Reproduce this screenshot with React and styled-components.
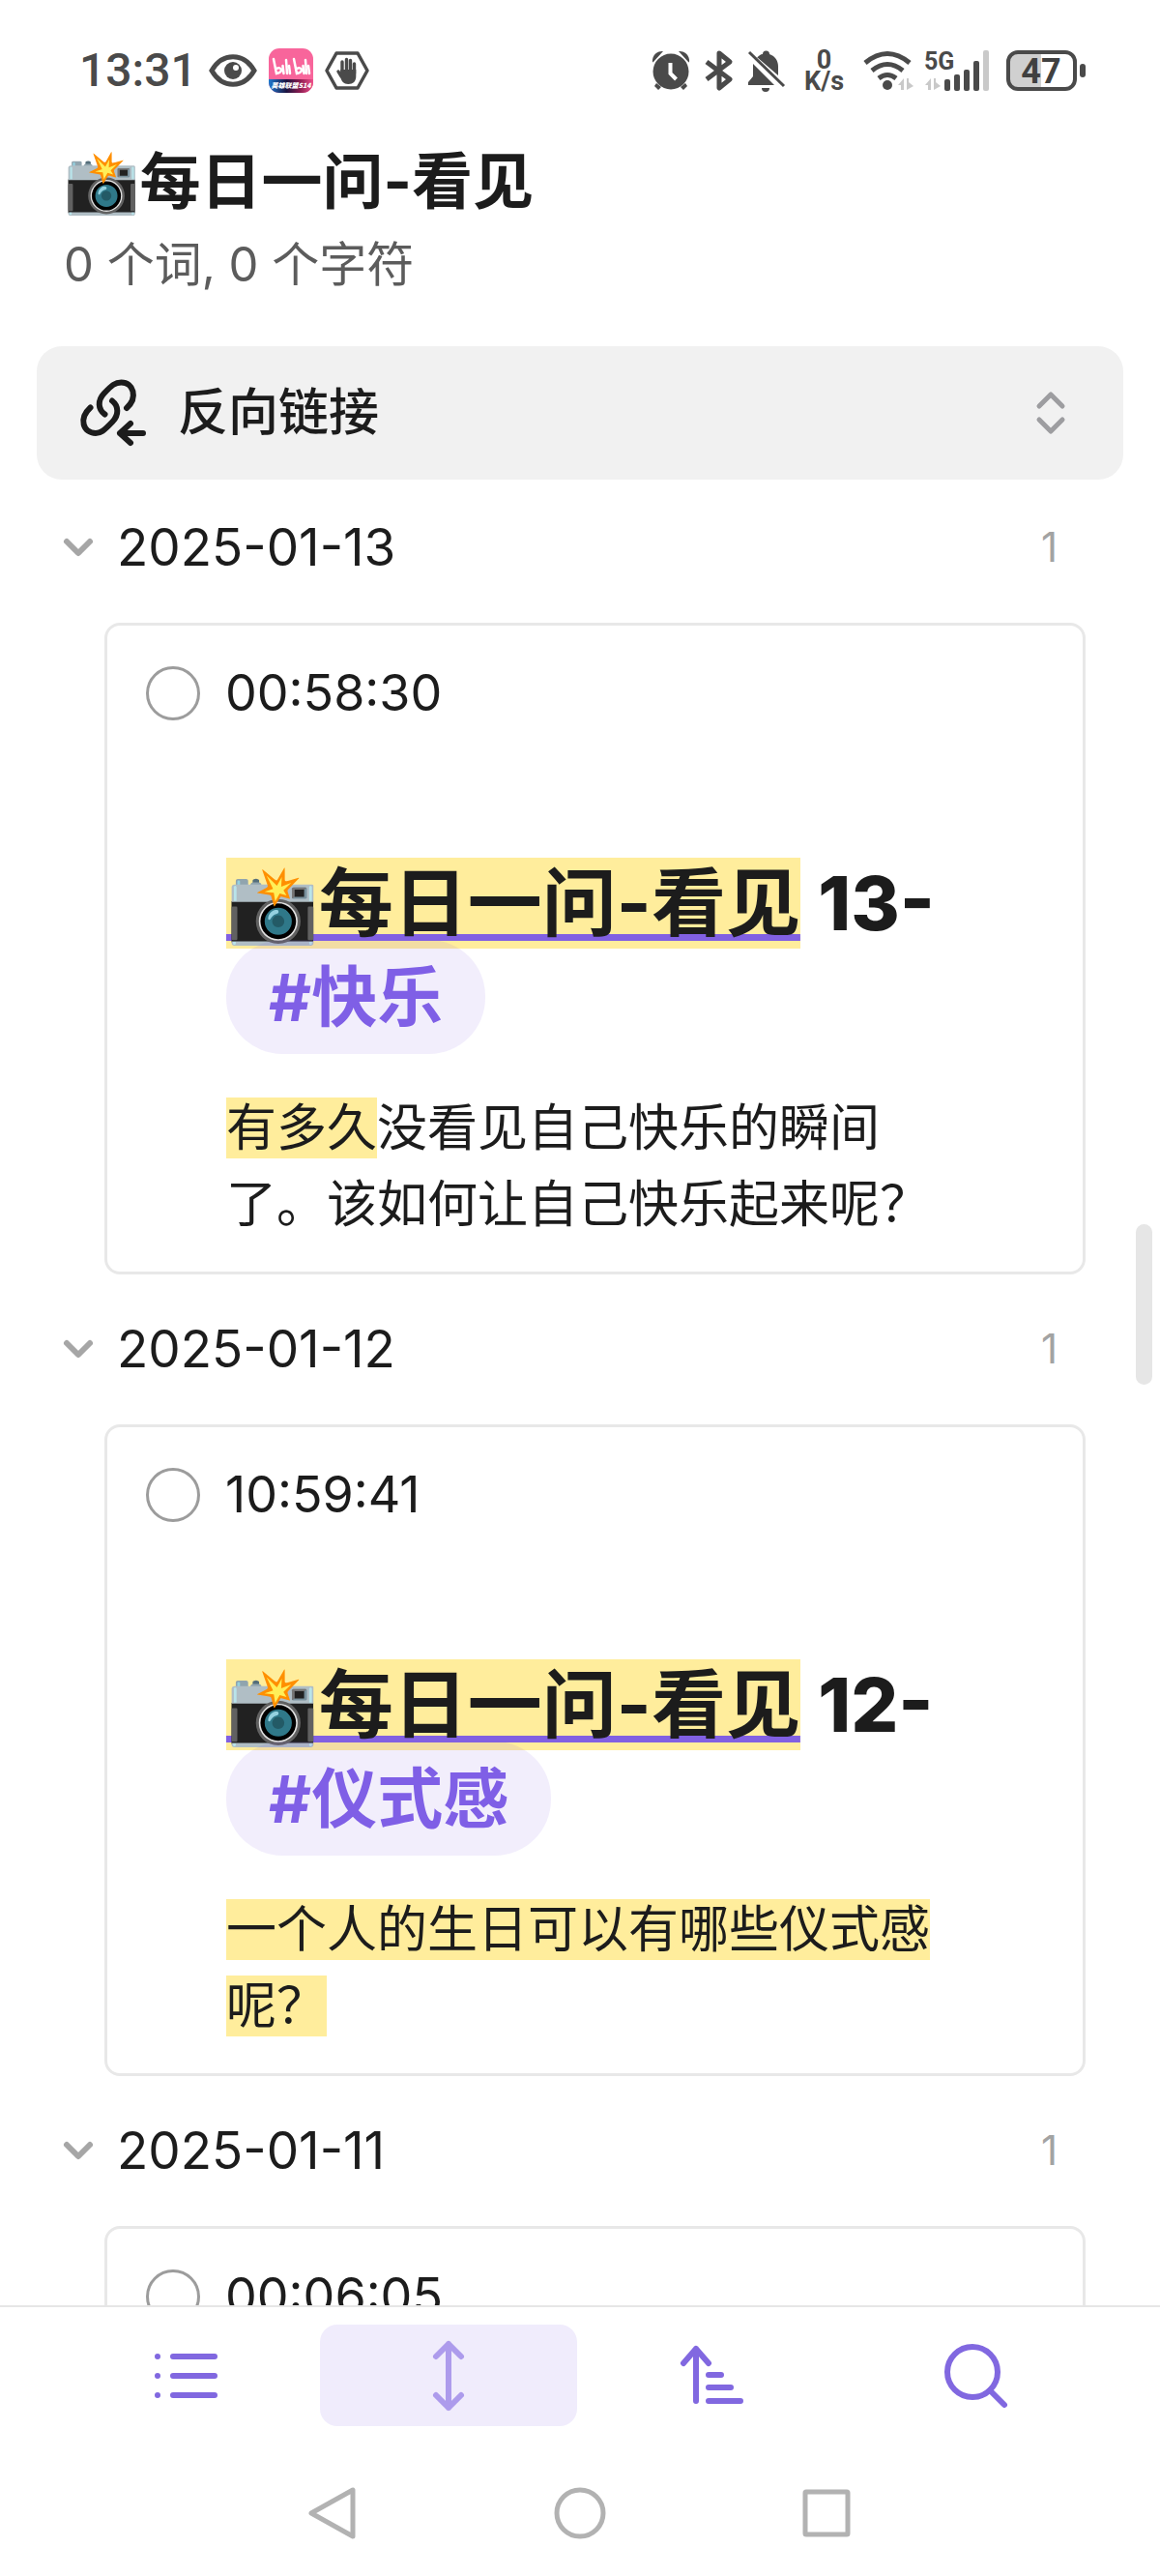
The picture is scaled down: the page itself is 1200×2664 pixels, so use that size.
import React, { useState } from "react";
import styled, { createGlobalStyle } from "styled-components";

const groups = [
  {
    date: "2025-01-13",
    count: 1,
    time: "00:58:30",
    day: "13-",
    tag: "#快乐",
    marked: "有多久",
    rest: "没看见自己快乐的瞬间了。该如何让自己快乐起来呢？",
  },
  {
    date: "2025-01-12",
    count: 1,
    time: "10:59:41",
    day: "12-",
    tag: "#仪式感",
    marked: "一个人的生日可以有哪些仪式感呢？",
    rest: "",
  },
  { date: "2025-01-11", count: 1, time: "00:06:05" },
];

const StatusIcons = () => (
  <>
    <svg width="40" height="42" viewBox="0 0 40 42" fill="#4a4a4a">
      <path d="M1 12A10 10 0 0 1 12 1L1.500 12.500ZM39 12A10 10 0 0 0 28 1L38.500 12.500Z" />
      <path d="M5 34l5 4-3 3-4-4zM35 34l-5 4 3 3 4-4z" />
      <circle cx="20" cy="22" r="18.500" />
      <path d="M19.500 13v11l6 6" fill="none" stroke="#fff" strokeWidth="4" />
    </svg>
    <svg width="28" height="42" viewBox="0 0 28 42" fill="none" stroke="#4a4a4a" strokeWidth="5" strokeLinejoin="round">
      <path d="M1 12l24 18-11 9V3l11 9L1 30" />
    </svg>
    <svg width="38" height="42" viewBox="0 0 38 42" fill="#4a4a4a">
      <path d="M8 9C10 6 13 4 15 4a3.500 3.500 0 0 1 7 0c6 2 9 7 9 13v9L9.500 7.500ZM5 14l22 22H0v-3l5-6Z" />
      <path d="M14 39h8a4 4 0 0 1-8 0Z" />
      <path d="M1 2l36 35" stroke="#4a4a4a" strokeWidth="3" />
    </svg>
    <Speed>
      <span>0</span>
      <span>K/s</span>
    </Speed>
    <svg width="132" height="42" viewBox="0 0 132 42">
      <g fill="none" stroke="#4a4a4a" strokeWidth="5">
        <path d="M2 13q23-19 46 0M9 21q16-13 32 0M16 29q9-7 18 0" />
      </g>
      <circle cx="25" cy="36" r="5" fill="#4a4a4a" />
      <g fill="#c9c9c9">
        <path d="M36 36l6-7v12h-3v-5zM45 29h2v4l5 4-7 4zM64 36l6-7v12h-3v-5zM73 29h2v4l5 4-7 4z" />
        <rect x="124" y="0" width="6" height="42" rx="2" />
      </g>
      <text x="63" y="20" fontFamily="Roboto" fontSize="25" fontWeight="700" fill="#4a4a4a">
        5G
      </text>
      <g fill="#4a4a4a">
        <rect x="84" y="30" width="6" height="12" rx="2" />
        <rect x="94" y="25" width="6" height="17" rx="2" />
        <rect x="104" y="20" width="6" height="22" rx="2" />
        <rect x="114" y="11" width="6" height="31" rx="2" />
      </g>
    </svg>
    <svg width="82" height="42" viewBox="0 0 82 42">
      <path d="M10 4h26v34H10a6 6 0 0 1-6-6V10a6 6 0 0 1 6-6Z" fill="#d0d0d0" />
      <rect x="2" y="2" width="69" height="38" rx="10" fill="none" stroke="#4a4a4a" strokeWidth="4" />
      <rect x="76" y="14" width="6" height="14" rx="3" fill="#4a4a4a" />
      <text x="36" y="34" textAnchor="middle" fontFamily="Roboto" fontSize="36" fontWeight="700" fill="#404040">
        47
      </text>
    </svg>
  </>
);

const AppBadges = () => (
  <>
    <svg width="50" height="34" viewBox="0 0 50 34">
      <path d="M3 17C14-2 36-2 47 17C36 36 14 36 3 17Z" fill="none" stroke="#4a4a4a" strokeWidth="5" />
      <circle cx="25" cy="17" r="9" fill="#4a4a4a" />
      <circle cx="28" cy="14" r="3" fill="#fff" />
    </svg>
    <svg width="46" height="46" viewBox="0 0 46 46">
      <defs>
        <linearGradient id="band">
          <stop offset="0" stopColor="#1f7ad0" />
          <stop offset="0.400" stopColor="#1c1440" />
          <stop offset="0.700" stopColor="#8a1c50" />
          <stop offset="1" stopColor="#f0508c" />
        </linearGradient>
        <clipPath id="badge">
          <rect width="46" height="46" rx="11" />
        </clipPath>
      </defs>
      <g clipPath="url(#badge)">
        <rect width="46" height="46" fill="#f8659b" />
        <rect y="32" width="46" height="14" fill="url(#band)" />
        <g fill="none" stroke="#fff" strokeWidth="2.500" strokeLinecap="round">
          <path d="M5 11l3 15c8-1 5-8 0-5M14.500 18l1 8M18 12l1 14M21 18l1 8M26 11l3 15c8-1 5-8 0-5M35.500 18l1 8M38 12l1 14M41 18l1 8" />
        </g>
        <text x="23" y="41" textAnchor="middle" fontFamily="Noto Sans CJK SC" fontStyle="italic" fontSize="7" fontWeight="900" fill="#fff">
          英雄联盟S14
        </text>
      </g>
    </svg>
    <svg width="46" height="42" viewBox="0 0 46 42">
      <path d="M12 3h22l10 18-10 18H12L2 21Z" fill="none" stroke="#4a4a4a" strokeWidth="3.500" strokeLinejoin="round" />
      <g stroke="#4a4a4a" strokeWidth="3.400" strokeLinecap="round" fill="none">
        <path d="M18 24V12M22.500 22V9.500M26.500 22V10.500M30.500 24V14M17 27l-3-5" />
      </g>
      <path d="M16.300 20h16v7c0 5-3 8-8 8-5 0-7-3-8-7Z" fill="#4a4a4a" />
    </svg>
  </>
);

const LinkBackIcon = () => (
  <svg width="70" height="70" viewBox="0 0 70 70" fill="none" stroke="#1c1c1c" strokeWidth="6" strokeLinecap="round" strokeLinejoin="round">
    <path d="M11.500 29.500C-1 41 4 56 17 56C22 56 25 54 34.500 44C41 37 41 28 34 22.500" />
    <path d="M26.500 36.500C19 31 19 22 25.500 15C34 6 37 3.500 43.500 3.500C56 3.500 61 19 49 30" />
    <path d="M66 56H42M53 46L42 56l11 10" />
  </svg>
);

const ToolIcon = ({ children }) => (
  <svg width="72" height="72" viewBox="0 0 72 72" fill="none" stroke="currentColor" strokeWidth="6" strokeLinecap="round" strokeLinejoin="round">
    {children}
  </svg>
);

const Entry = ({ group }) => {
  const [open, setOpen] = useState(true);
  return (
    <section>
      <DateRow type="button" aria-expanded={open} onClick={() => setOpen(!open)}>
        <svg width="30" height="20" viewBox="0 0 30 20" fill="none" stroke="#a6a6a6" strokeWidth="6" strokeLinecap="round" strokeLinejoin="round">
          <path d="M3 4l12 12L27 4" />
        </svg>
        <span>{group.date}</span>
        <Count>{group.count}</Count>
      </DateRow>
      {open && (
        <Card>
          <Task>
            <Circle type="checkbox" />
            {group.time}
          </Task>
          {group.tag && (
            <Body>
              <Heading>
                <Mark>
                  <NoteLink href="#note">📸每日一问-看见</NoteLink>
                </Mark>{" "}
                <Day>{group.day}</Day> <Tag href="#tag">{group.tag}</Tag>
              </Heading>
              <Text>
                <Mark>{group.marked}</Mark>
                {group.rest}
              </Text>
            </Body>
          )}
        </Card>
      )}
    </section>
  );
};

const App = () => {
  return (
    <Screen lang="zh-CN">
      <GlobalStyle />
      <StatusBar>
        <Clock>13:31</Clock>
        <Icons $gap={12}>
          <AppBadges />
        </Icons>
        <Spacer />
        <Icons $gap={16}>
          <StatusIcons />
        </Icons>
      </StatusBar>
      <Header>
        <Title>📸每日一问-看见</Title>
        <Stats>0 个词, 0 个字符</Stats>
      </Header>
      <Main>
        <PanelButton type="button">
          <LinkBackIcon />
          <span>反向链接</span>
          <Spacer />
          <svg width="30" height="46" viewBox="0 0 30 46" fill="none" stroke="#9d9da0" strokeWidth="5" strokeLinecap="round" strokeLinejoin="round">
            <path d="M3 16L15 4l12 12M3 30l12 12 12-12" />
          </svg>
        </PanelButton>
        <List>
          {groups.map((group) => (
            <Entry key={group.date} group={group} />
          ))}
        </List>
        <Thumb />
      </Main>
      <Toolbar>
        <ToolButton type="button" aria-label="列表">
          <ToolIcon>
            <path d="M7 16h0M7 36h0M7 56h0M23 16h43M23 36h43M23 56h43" />
          </ToolIcon>
        </ToolButton>
        <ToolButton type="button" aria-label="展开" $active>
          <ToolIcon>
            <path d="M36 3v66M23 16L36 3l13 13M23 56l13 13 13-13" />
          </ToolIcon>
        </ToolButton>
        <ToolButton type="button" aria-label="排序">
          <ToolIcon>
            <path d="M20 62V8M7 23L20 8l13 15M33 35h13M33 48h23M33 62h33" />
          </ToolIcon>
        </ToolButton>
        <ToolButton type="button" aria-label="搜索">
          <ToolIcon>
            <circle cx="34" cy="32" r="26" />
            <path d="M52 51l15 15" />
          </ToolIcon>
        </ToolButton>
      </Toolbar>
      <SystemNav>
        <NavButton type="button" aria-label="返回">
          <svg width="56" height="56" viewBox="0 0 56 56">
            <path d="M48 4v48L5 28Z" />
          </svg>
        </NavButton>
        <NavButton type="button" aria-label="主页">
          <svg width="56" height="56" viewBox="0 0 56 56">
            <circle cx="28" cy="28" r="24" />
          </svg>
        </NavButton>
        <NavButton type="button" aria-label="最近">
          <svg width="56" height="56" viewBox="0 0 56 56">
            <rect x="6" y="6" width="44" height="44" rx="1" />
          </svg>
        </NavButton>
      </SystemNav>
    </Screen>
  );
};

const GlobalStyle = createGlobalStyle`
  * {
    box-sizing: border-box;
  }
  body {
    margin: 0;
    background: #fff;
    color: #1c1c1c;
    font-family: Inter, "Noto Sans CJK SC", "Noto Color Emoji", sans-serif;
  }
  button {
    border: none;
    background: none;
    padding: 0;
    font: inherit;
    color: inherit;
    cursor: pointer;
  }
  svg {
    display: block;
    flex: none;
    overflow: visible;
  }
`;

const Screen = styled.div`
  display: flex;
  flex-direction: column;
  height: 100vh;
  overflow: hidden;
`;

const StatusBar = styled.div`
  display: flex;
  align-items: center;
  padding: 46px 77px 46px 82px;
`;
const Clock = styled.span`
  margin-right: 12px;
  font-family: Roboto, sans-serif;
  font-size: 48px;
  font-weight: 500;
  line-height: 54px;
  color: #4a4a4a;
`;
const Icons = styled.div`
  display: flex;
  align-items: center;
  gap: ${(props) => props.$gap}px;
`;
const Spacer = styled.span`
  flex: 1;
`;
const Speed = styled.div`
  display: flex;
  flex-direction: column;
  align-items: center;
  width: 49px;
  font-family: Roboto, sans-serif;
  font-size: 27px;
  font-weight: 700;
  line-height: 22px;
  color: #4a4a4a;
`;

const Header = styled.header`
  padding: 5px 66px 54px;
`;
const Title = styled.h1`
  margin: 0 0 21px;
  font-size: 63px;
  font-weight: 700;
  line-height: 72px;
`;
const Stats = styled.p`
  margin: 0;
  font-size: 49px;
  line-height: 60px;
  color: #5c5c5c;
`;

const Main = styled.main`
  position: relative;
  flex: 1;
  min-height: 0;
  overflow: hidden;
`;
const PanelButton = styled.button`
  && {
    display: flex;
    align-items: center;
    gap: 32px;
    width: calc(100% - 76px);
    height: 138px;
    margin: 0 38px;
    padding: 0 60px 0 44px;
    border-radius: 26px;
    background: #f1f1f1;
    font-size: 52px;
    font-weight: 500;
    line-height: 64px;
  }
`;
const List = styled.div`
  display: flex;
  flex-direction: column;
  gap: 45px;
  padding-top: 38px;
`;
const DateRow = styled.button`
  && {
    display: flex;
    align-items: center;
    width: 100%;
    padding: 0 106px 0 66px;
    font-size: 53px;
    line-height: 64px;
    gap: 25px;
  }
`;
const Count = styled.span`
  margin-left: auto;
  font-size: 42px;
  color: #a3a3a3;
`;

const Card = styled.article`
  margin: 46px 77px 0 108px;
  padding: 38px 40px 30px;
  border: 3px solid #e8e8e8;
  border-radius: 16px;
`;
const Task = styled.label`
  display: flex;
  align-items: center;
  gap: 26px;
  font-size: 52px;
  line-height: 64px;
`;
const Circle = styled.input`
  appearance: none;
  width: 56px;
  height: 56px;
  margin: 0;
  border: 3px solid #9c9c9c;
  border-radius: 50%;
`;
const Body = styled.div`
  padding: 138px 83px 0;
`;
const Heading = styled.h2`
  margin: 0 0 52px;
  font-size: 77px;
  font-weight: 700;
  line-height: 94px;
`;
const Day = styled.span`
  font-weight: 800;
`;
const Mark = styled.mark`
  background: #ffed9c;
  color: inherit;
`;
const NoteLink = styled.a`
  color: inherit;
  text-decoration: underline #8160e2 7px;
  text-underline-offset: 4px;
  text-decoration-skip-ink: none;
`;
const Tag = styled.a`
  padding: 18px 44px;
  border-radius: 58px;
  background: rgba(128, 88, 230, 0.1);
  color: #7f5fe6;
  font-size: 68px;
  line-height: 1;
  text-decoration: none;
  white-space: nowrap;
`;
const Text = styled.p`
  margin: 0;
  font-size: 52px;
  line-height: 79px;
`;

/* scroll thumb floats over the list */
const Thumb = styled.div`
  position: absolute;
  top: 908px;
  right: 8px;
  width: 17px;
  height: 166px;
  border-radius: 9px;
  background: #e6e6e6;
`;

const Toolbar = styled.nav`
  display: grid;
  grid-template-columns: repeat(4, 1fr);
  gap: 7px;
  padding: 18px 59px 20px;
  border-top: 2px solid #e6e6e6;
`;
const ToolButton = styled.button`
  && {
    display: flex;
    align-items: center;
    justify-content: center;
    height: 105px;
    border-radius: 18px;
    background: ${(props) => (props.$active ? "#f0ecfc" : "none")};
    color: ${(props) => (props.$active ? "#ad9bec" : "#8168e0")};
  }
`;
const SystemNav = styled.nav`
  display: flex;
  justify-content: center;
  gap: 199px;
  padding: 42px 0 37px;
`;
const NavButton = styled.button`
  svg {
    fill: none;
    stroke: #b2b2b2;
    stroke-width: 5;
    stroke-linejoin: round;
  }
`;

export default App;
